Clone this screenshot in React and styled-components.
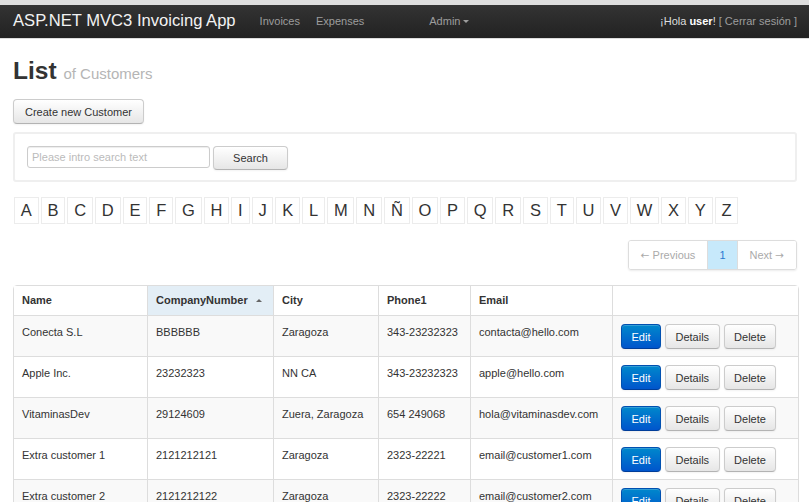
import React from 'react';
import styled, { createGlobalStyle } from 'styled-components';

const letters = ['A','B','C','D','E','F','G','H','I','J','K','L','M','N','Ñ','O','P','Q','R','S','T','U','V','W','X','Y','Z'];

const customers = [
  { name: 'Conecta S.L', number: 'BBBBBB', city: 'Zaragoza', phone: '343-23232323', email: 'contacta@hello.com' },
  { name: 'Apple Inc.', number: '23232323', city: 'NN CA', phone: '343-23232323', email: 'apple@hello.com' },
  { name: 'VitaminasDev', number: '29124609', city: 'Zuera, Zaragoza', phone: '654 249068', email: 'hola@vitaminasdev.com' },
  { name: 'Extra customer 1', number: '2121212121', city: 'Zaragoza', phone: '2323-22221', email: 'email@customer1.com' },
  { name: 'Extra customer 2', number: '2121212122', city: 'Zaragoza', phone: '2323-22222', email: 'email@customer2.com' },
];

const columns = [
  { label: 'Name', width: 133 },
  { label: 'CompanyNumber', width: 126, sorted: true },
  { label: 'City', width: 105 },
  { label: 'Phone1', width: 92 },
  { label: 'Email', width: 142 },
  { label: '', width: 186 },
];

function App() {
  return (
    <>
      <GlobalStyle />
      <TopStrip />
      <Navbar>
        <Brand>ASP.NET MVC3 Invoicing App</Brand>
        <NavLink>Invoices</NavLink>
        <NavLink>Expenses</NavLink>
        <AdminLink>Admin <Caret /></AdminLink>
        <Greeting>
          ¡Hola <strong>user</strong>! <Logout>[ Cerrar sesión ]</Logout>
        </Greeting>
      </Navbar>

      <Container>
        <Title>List <small>of Customers</small></Title>

        <Button>Create new Customer</Button>

        <Well>
          <SearchInput placeholder="Please intro search text" />
          <SearchButton>Search</SearchButton>
        </Well>

        <Alphabet>
          {letters.map((l) => (
            <Letter key={l}>{l}</Letter>
          ))}
        </Alphabet>

        <PagerRow>
          <Pager>
            <PageItem disabled><Arrow>←</Arrow> Previous</PageItem>
            <PageItem active>1</PageItem>
            <PageItem disabled>Next <Arrow>→</Arrow></PageItem>
          </Pager>
        </PagerRow>

        <Table>
          <thead>
            <tr>
              {columns.map((c, i) => (
                <Th key={i} sorted={c.sorted} style={{ width: c.width }}>
                  {c.label}
                  {c.sorted && <SortArrow />}
                </Th>
              ))}
            </tr>
          </thead>
          <tbody>
            {customers.map((c, i) => (
              <Row key={i} striped={i % 2 === 0}>
                <Td>{c.name}</Td>
                <Td>{c.number}</Td>
                <Td>{c.city}</Td>
                <Td>{c.phone}</Td>
                <Td>{c.email}</Td>
                <ActionsTd>
                  <Actions>
                    <SmallButton primary>Edit</SmallButton>
                    <SmallButton>Details</SmallButton>
                    <SmallButton>Delete</SmallButton>
                  </Actions>
                </ActionsTd>
              </Row>
            ))}
          </tbody>
        </Table>
      </Container>
    </>
  );
}

const GlobalStyle = createGlobalStyle`
  html, body {
    margin: 0;
    padding: 0;
    overflow: hidden;
    background: #fff;
  }
  body {
    font-family: "Liberation Sans", Arial, sans-serif;
    font-size: 11px;
    color: #333;
  }
  * {
    box-sizing: border-box;
  }
`

const TopStrip = styled.div`
  height: 5px;
  background: #dedede;
`

const Navbar = styled.div`
  display: flex;
  align-items: center;
  height: 34px;
  padding: 0 12px 2px 13px;
  background: linear-gradient(#333333, #222222);
  border-bottom: 1px solid #dcdcdc;
`

const Brand = styled.div`
  font-size: 16.6px;
  color: #f2f2f2;
  margin-right: 16px;
`

const NavLink = styled.div`
  padding: 0 8px;
  font-size: 11px;
  color: #9d9d9d;
`

const AdminLink = styled(NavLink)`
  margin-left: 49px;
  display: flex;
  align-items: center;
  gap: 3px;
`

const Caret = styled.span`
  display: inline-block;
  width: 0;
  height: 0;
  margin-top: 1px;
  border-left: 3px solid transparent;
  border-right: 3px solid transparent;
  border-top: 3px solid #9d9d9d;
`

const Greeting = styled.div`
  margin-left: auto;
  font-size: 11px;
  color: #dddddd;
  strong {
    color: #fff;
  }
`

const Logout = styled.span`
  color: #9d9d9d;
`

const Container = styled.div`
  padding: 0 12px 0 13px;
`

const Title = styled.h1`
  margin: 17px 0 0;
  font-size: 24.5px;
  line-height: 30px;
  font-weight: bold;
  color: #333;
  small {
    font-size: 15px;
    line-height: 1;
    font-weight: normal;
    color: #b5b5b5;
  }
`

const Button = styled.button`
  display: block;
  margin-top: 13px;
  height: 25px;
  padding: 0 11px;
  font-family: inherit;
  font-size: 11px;
  color: #333;
  background: linear-gradient(#ffffff, #e6e6e6);
  border: 1px solid #cccccc;
  border-bottom-color: #b3b3b3;
  border-radius: 4px;
  box-shadow: inset 0 1px 0 rgba(255,255,255,.2), 0 1px 2px rgba(0,0,0,.05);
`

const Well = styled.div`
  display: flex;
  align-items: flex-start;
  gap: 3px;
  margin-top: 8px;
  padding: 13px 13px 10px 12px;
  border: 2px solid #efefef;
  border-radius: 3px;
  background: #fff;
`

const SearchInput = styled.input`
  width: 183px;
  height: 22px;
  margin-top: -1px;
  padding: 0 4px;
  font-family: inherit;
  font-size: 11px;
  color: #555;
  border: 1px solid #cccccc;
  border-radius: 3px;
  box-shadow: inset 0 1px 1px rgba(0,0,0,.075);
  outline: none;
  &::placeholder {
    color: #bbbbbb;
  }
`

const SearchButton = styled(Button)`
  margin-top: -1px;
  width: 75px;
  height: 24px;
`

const Alphabet = styled.div`
  display: flex;
  gap: 2px;
  margin-top: 15px;
  padding-left: 1px;
`

const Letter = styled.div`
  height: 27px;
  padding: 0 5.85px;
  font-size: 16.5px;
  line-height: 25px;
  color: #333;
  border: 1px solid #ececec;
`

const PagerRow = styled.div`
  display: flex;
  justify-content: flex-end;
  margin-top: 16px;
`

const Pager = styled.div`
  display: flex;
  height: 30px;
  border: 1px solid #dddddd;
  border-radius: 3px;
  box-shadow: 0 1px 2px rgba(0,0,0,.08);
  overflow: hidden;
`

const PageItem = styled.div`
  padding: 0 ${(p) => (p.active ? '11px' : '12px')};
  line-height: 28px;
  font-size: 11px;
  color: ${(p) => (p.active ? '#2a7ad1' : '#aaaaaa')};
  background: ${(p) => (p.active ? '#c7e9fb' : '#fff')};
  & + & {
    border-left: 1px solid #dddddd;
  }
`

const Arrow = styled.span`
  font-family: "DejaVu Sans", sans-serif;
  font-size: 10.5px;
`

const Table = styled.table`
  width: 100%;
  margin-top: 15px;
  table-layout: fixed;
  border-collapse: separate;
  border-spacing: 0;
  border: 1px solid #dddddd;
  border-radius: 4px;
`

const Th = styled.th`
  padding: 5px 8px 6px;
  line-height: 18px;
  font-size: 11px;
  font-weight: bold;
  text-align: left;
  color: #333;
  background: ${(p) => (p.sorted ? '#e3eef6' : '#fff')};
  & + & {
    border-left: 1px solid #dddddd;
  }
`

const SortArrow = styled.span`
  display: inline-block;
  width: 0;
  height: 0;
  margin: 0 0 2px 8px;
  vertical-align: middle;
  border-left: 3px solid transparent;
  border-right: 3px solid transparent;
  border-bottom: 3px solid #666;
`

const Row = styled.tr`
  background: ${(p) => (p.striped ? '#f9f9f9' : '#fff')};
`

const Td = styled.td`
  padding: 7px 8px 8px;
  line-height: 18px;
  font-size: 11px;
  vertical-align: top;
  color: #333;
  border-top: 1px solid #dddddd;
  white-space: nowrap;
  overflow: hidden;
  & + & {
    border-left: 1px solid #dddddd;
  }
`

const ActionsTd = styled(Td)`
  padding: 8px 8px 7px;
  border-left: 1px solid #dddddd;
`

const Actions = styled.div`
  display: flex;
  gap: 4px;
`

const SmallButton = styled.button`
  height: 25px;
  padding: 0 9.5px;
  font-family: inherit;
  font-size: 11px;
  color: ${(p) => (p.primary ? '#fff' : '#333')};
  background: ${(p) => (p.primary ? 'linear-gradient(#0088cc, #0055cc)' : 'linear-gradient(#ffffff, #e6e6e6)')};
  border: 1px solid ${(p) => (p.primary ? '#0050b0' : '#cccccc')};
  border-bottom-color: ${(p) => (p.primary ? '#003d99' : '#b3b3b3')};
  border-radius: 4px;
  box-shadow: inset 0 1px 0 rgba(255,255,255,.2), 0 1px 2px rgba(0,0,0,.05);
`

export default App;
